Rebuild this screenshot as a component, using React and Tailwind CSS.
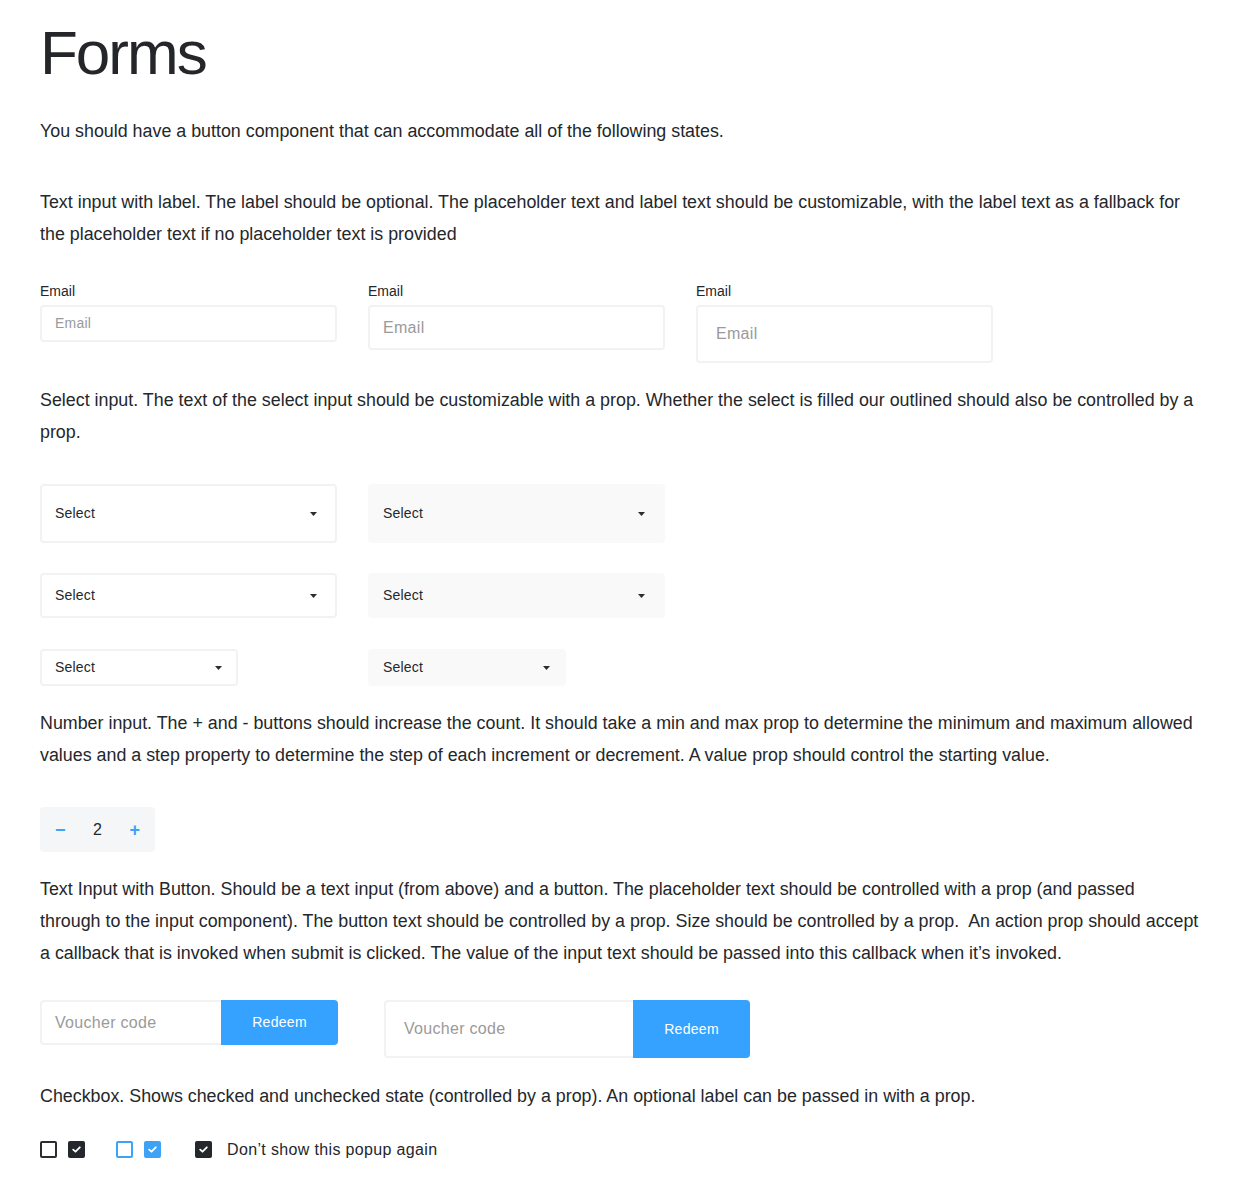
import React from "react";

const font = { fontFamily: '"Liberation Sans", Arial, sans-serif' };

function Arrow() {
  return (
    <svg width="7" height="4" viewBox="0 0 7 4" className="shrink-0">
      <path d="M0 0 L7 0 L3.5 4 Z" fill="#2a2d31" />
    </svg>
  );
}

function Check() {
  return (
    <svg width="9" height="7" viewBox="0 0 9 7">
      <path d="M1.2 3.6 L3.5 5.7 L7.8 1.3" fill="none" stroke="#fff" strokeWidth="1.8" strokeLinecap="round" strokeLinejoin="round" />
    </svg>
  );
}

export default function App() {
  return (
    <div style={font} className="bg-white text-[#24272b] pl-[40px] pr-[45px] pt-[21px] pb-[28px] min-h-[1186px]">
      <h1 className="text-[62px] leading-[64px] font-normal tracking-[-2px] text-[#24262a]">Forms</h1>

      <p className="mt-[30px] text-[17.85px] leading-[32px]">
        You should have a button component that can accommodate all of the following states.
      </p>

      <p className="mt-[39px] text-[17.85px] leading-[32px]">
        Text input with label. The label should be optional. The placeholder text and label text should be customizable, with the label text as a fallback for the placeholder text if no placeholder text is provided
      </p>

      <div className="mt-[33px] flex items-start gap-[31px]">
        <div className="w-[297px]">
          <div className="text-[14px] leading-[16px]">Email</div>
          <div className="mt-[6px] h-[37px] border-2 border-[#f2f2f2] rounded-[4px] flex items-center pl-[13px] text-[14px] text-[#9a9a9a] tracking-[0.2px]">Email</div>
        </div>
        <div className="w-[297px]">
          <div className="text-[14px] leading-[16px]">Email</div>
          <div className="mt-[6px] h-[45px] border-2 border-[#f2f2f2] rounded-[4px] flex items-center pl-[13px] text-[16px] text-[#9a9a9a] tracking-[0.3px]">Email</div>
        </div>
        <div className="w-[297px]">
          <div className="text-[14px] leading-[16px]">Email</div>
          <div className="mt-[6px] h-[58px] border-2 border-[#f2f2f2] rounded-[4px] flex items-center pl-[18px] text-[16px] text-[#9a9a9a] tracking-[0.3px]">Email</div>
        </div>
      </div>

      <p className="mt-[21px] text-[17.85px] leading-[32px]">
        Select input. The text of the select input should be customizable with a prop. Whether the select is filled our outlined should also be controlled by a prop.
      </p>

      <div className="mt-[36px] flex flex-col gap-[30px]">
        <div className="flex gap-[31px]">
          <div className="w-[297px] h-[59px] border-2 border-[#f2f2f2] rounded-[4px] flex items-center justify-between pl-[13px] pr-[18px] text-[14px] tracking-[0.2px]">
            <span>Select</span><Arrow />
          </div>
          <div className="w-[297px] h-[59px] bg-[#f9f9f9] rounded-[4px] flex items-center justify-between pl-[15px] pr-[20px] text-[14px] tracking-[0.2px]">
            <span>Select</span><Arrow />
          </div>
        </div>
        <div className="flex gap-[31px]">
          <div className="w-[297px] h-[45px] border-2 border-[#f2f2f2] rounded-[4px] flex items-center justify-between pl-[13px] pr-[18px] text-[14px] tracking-[0.2px]">
            <span>Select</span><Arrow />
          </div>
          <div className="w-[297px] h-[45px] bg-[#f9f9f9] rounded-[4px] flex items-center justify-between pl-[15px] pr-[20px] text-[14px] tracking-[0.2px]">
            <span>Select</span><Arrow />
          </div>
        </div>
        <div className="flex gap-[130px] mt-[1px]">
          <div className="w-[198px] h-[37px] border-2 border-[#f2f2f2] rounded-[4px] flex items-center justify-between pl-[13px] pr-[14px] text-[14px] tracking-[0.2px]">
            <span>Select</span><Arrow />
          </div>
          <div className="w-[198px] h-[37px] bg-[#f9f9f9] rounded-[4px] flex items-center justify-between pl-[15px] pr-[16px] text-[14px] tracking-[0.2px]">
            <span>Select</span><Arrow />
          </div>
        </div>
      </div>

      <p className="mt-[21px] text-[17.85px] leading-[32px]">
        Number input. The + and - buttons should increase the count. It should take a min and max prop to determine the minimum and maximum allowed values and a step property to determine the step of each increment or decrement. A value prop should control the starting value.
      </p>

      <div className="mt-[36px] w-[115px] h-[45px] bg-[#f5f6f8] rounded-[4px] flex items-center justify-between px-[15px]">
        <span className="text-[18px] font-bold text-[#3ea2f5] leading-none">−</span>
        <span className="text-[16px] leading-none">2</span>
        <span className="text-[18px] font-bold text-[#3ea2f5] leading-none">+</span>
      </div>

      <p className="mt-[21px] text-[17.85px] leading-[32px]">
        Text Input with Button. Should be a text input (from above) and a button. The placeholder text should be controlled with a prop (and passed through to the input component). The button text should be controlled by a prop. Size should be controlled by a prop.&nbsp; An action prop should accept a callback that is invoked when submit is clicked. The value of the input text should be passed into this callback when it’s invoked.
      </p>

      <div className="mt-[31px] flex items-start gap-[46px]">
        <div className="flex h-[45px]">
          <div className="w-[181px] border-2 border-r-0 border-[#f2f2f2] rounded-l-[4px] flex items-center pl-[13px] text-[16px] text-[#9a9a9a] tracking-[0.3px]">Voucher code</div>
          <div className="w-[117px] bg-[#36a2ff] rounded-r-[4px] flex items-center justify-center text-white text-[14px] tracking-[0.3px]">Redeem</div>
        </div>
        <div className="flex h-[58px]">
          <div className="w-[249px] border-2 border-r-0 border-[#f2f2f2] rounded-l-[4px] flex items-center pl-[18px] text-[16px] text-[#9a9a9a] tracking-[0.3px]">Voucher code</div>
          <div className="w-[117px] bg-[#36a2ff] rounded-r-[4px] flex items-center justify-center text-white text-[14px] tracking-[0.3px]">Redeem</div>
        </div>
      </div>

      <p className="mt-[22px] text-[17.85px] leading-[32px]">
        Checkbox. Shows checked and unchecked state (controlled by a prop). An optional label can be passed in with a prop.
      </p>

      <div className="mt-[29px] flex items-center">
        <div className="w-[17px] h-[17px] border-2 border-[#2a2d31] rounded-[2px]" />
        <div className="ml-[11px] w-[17px] h-[17px] bg-[#24272b] rounded-[2px] flex items-center justify-center"><Check /></div>
        <div className="ml-[31px] w-[17px] h-[17px] border-2 border-[#3ea2f5] rounded-[2px]" />
        <div className="ml-[11px] w-[17px] h-[17px] bg-[#3ea2f5] rounded-[2px] flex items-center justify-center"><Check /></div>
        <div className="ml-[34px] w-[17px] h-[17px] bg-[#24272b] rounded-[2px] flex items-center justify-center"><Check /></div>
        <span className="ml-[15px] text-[16px] tracking-[0.35px] leading-none">Don’t show this popup again</span>
      </div>
    </div>
  );
}
